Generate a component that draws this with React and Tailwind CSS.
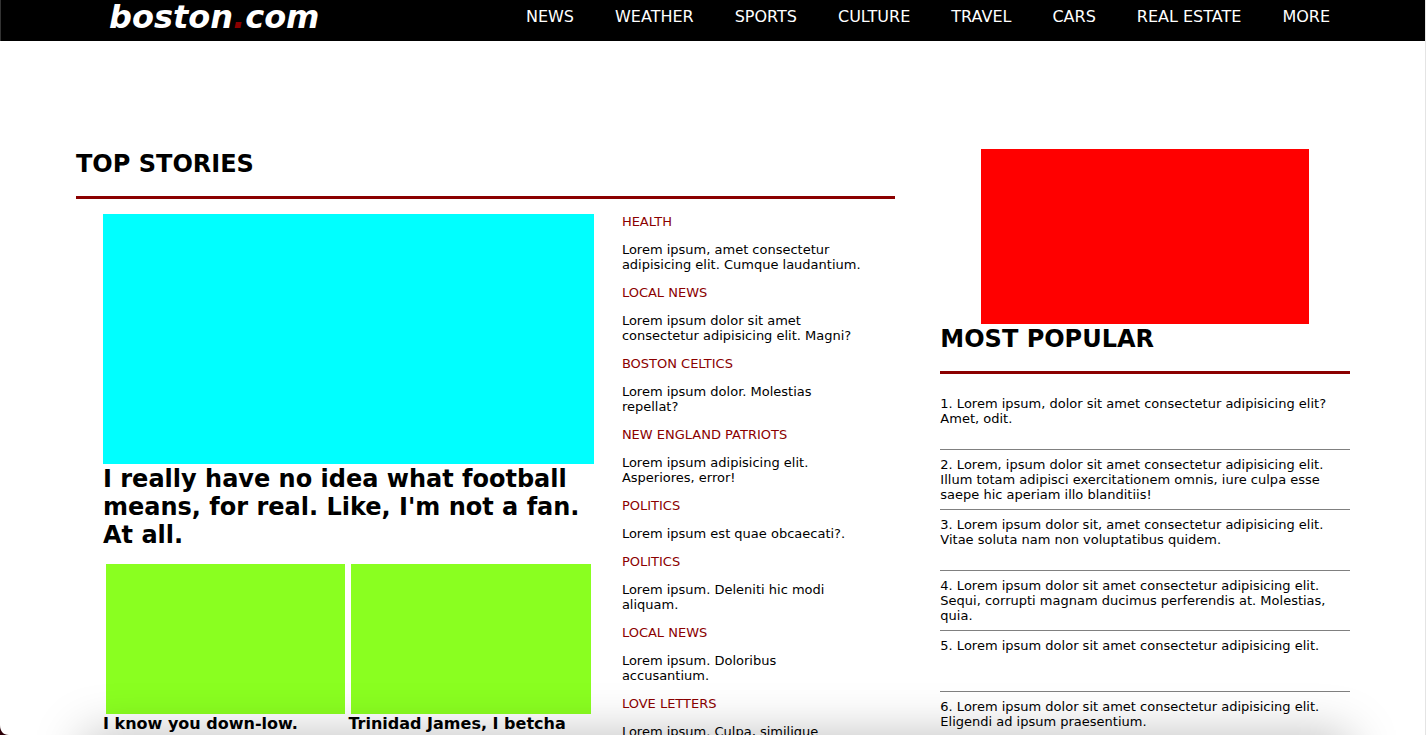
const navItems = ["NEWS", "WEATHER", "SPORTS", "CULTURE", "TRAVEL", "CARS", "REAL ESTATE", "MORE"];

const briefs = [
  ["HEALTH", "Lorem ipsum, amet consectetur adipisicing elit. Cumque laudantium."],
  ["LOCAL NEWS", "Lorem ipsum dolor sit amet consectetur adipisicing elit. Magni?"],
  ["BOSTON CELTICS", "Lorem ipsum dolor. Molestias repellat?"],
  ["NEW ENGLAND PATRIOTS", "Lorem ipsum adipisicing elit. Asperiores, error!"],
  ["POLITICS", "Lorem ipsum est quae obcaecati?."],
  ["POLITICS", "Lorem ipsum. Deleniti hic modi aliquam."],
  ["LOCAL NEWS", "Lorem ipsum. Doloribus accusantium."],
  ["LOVE LETTERS", "Lorem ipsum. Culpa, similique"],
];

const popular = [
  "1. Lorem ipsum, dolor sit amet consectetur adipisicing elit? Amet, odit.",
  "2. Lorem, ipsum dolor sit amet consectetur adipisicing elit. Illum totam adipisci exercitationem omnis, iure culpa esse saepe hic aperiam illo blanditiis!",
  "3. Lorem ipsum dolor sit, amet consectetur adipisicing elit. Vitae soluta nam non voluptatibus quidem.",
  "4. Lorem ipsum dolor sit amet consectetur adipisicing elit. Sequi, corrupti magnam ducimus perferendis at. Molestias, quia.",
  "5. Lorem ipsum dolor sit amet consectetur adipisicing elit.",
  "6. Lorem ipsum dolor sit amet consectetur adipisicing elit. Eligendi ad ipsum praesentium.",
];

const cards = ["I know you down-low.", "Trinidad James, I betcha"];

function SectionTitle({ children }) {
  return (
    <h2 className="border-b-3 border-[#8b0000] pb-[17px] text-2xl leading-[30px] font-bold">{children}</h2>
  );
}

function Header() {
  return (
    <header className="flex h-[41px] items-start justify-between border-l border-[#333333] bg-black pr-[95px] pl-[108px] text-white">
      <a href="#" className="text-[32px] leading-[34px] font-bold italic">
        boston<span className="text-[#8b0000]">.</span>com
      </a>
      <nav aria-label="Sections" className="flex gap-[41px] leading-[34px]">
        {navItems.map((item) => (
          <a key={item} href="#" className="whitespace-nowrap">{item}</a>
        ))}
      </nav>
    </header>
  );
}

function TopStories() {
  return (
    <section>
      <SectionTitle>TOP STORIES</SectionTitle>
      <div className="mt-[15px] grid grid-cols-[2fr_1fr] gap-7 pr-7 pl-[27px]">
        <div>
          <article>
            <div className="h-[250px] bg-[#00ffff]" />
            <h2 className="pt-px text-2xl leading-7 font-bold">
              I really have no idea what football means, for real. Like, I'm not a fan. At all.
            </h2>
          </article>
          <div className="mt-[15px] grid grid-cols-2">
            {cards.map((title) => (
              <article key={title}>
                <div className="mx-[3px] h-[150px] bg-[#8aff20]" />
                <h3 className="leading-5 font-bold whitespace-nowrap">{title}</h3>
              </article>
            ))}
          </div>
        </div>
        <div className="flex flex-col gap-[13px] pr-1 text-[13px] leading-[15px]">
          {briefs.map(([topic, text], i) => (
            <article key={i} className="flex flex-col gap-[13px]">
              <h4 className="text-[#8b0000]">{topic}</h4>
              <p>{text}</p>
            </article>
          ))}
        </div>
      </div>
    </section>
  );
}

function Sidebar() {
  return (
    <aside>
      <div className="mx-[10%] h-[175px] bg-[#ff0000]" />
      <SectionTitle>MOST POPULAR</SectionTitle>
      <ol className="mt-[15px] grid h-[363px] grid-rows-6 text-[13px] leading-[15px]">
        {popular.map((text) => (
          <li key={text} className="border-b border-[#808080] pt-[7px]">{text}</li>
        ))}
      </ol>
    </aside>
  );
}

export default function App() {
  return (
    <div className="relative h-screen overflow-hidden border-r border-[#e4e4e4] bg-white font-['DejaVu_Sans',sans-serif] text-base text-black">
      <Header />
      <main className="grid grid-cols-[2fr_1fr] gap-[45px] pt-[108px] pr-[75px] pl-[76px]">
        <TopStories />
        <Sidebar />
      </main>
      <div className="pointer-events-none absolute top-full right-[76px] left-[84px] h-20 shadow-[0_0_50px_rgba(0,0,0,0.26)]" />
      <svg aria-hidden="true" viewBox="0 0 9 10" className="absolute bottom-0 left-0 h-[10px] w-[9px]">
        <path d="M0 0C0 6 3 10 9 10H0Z" fill="#2b0008" />
      </svg>
    </div>
  );
}
